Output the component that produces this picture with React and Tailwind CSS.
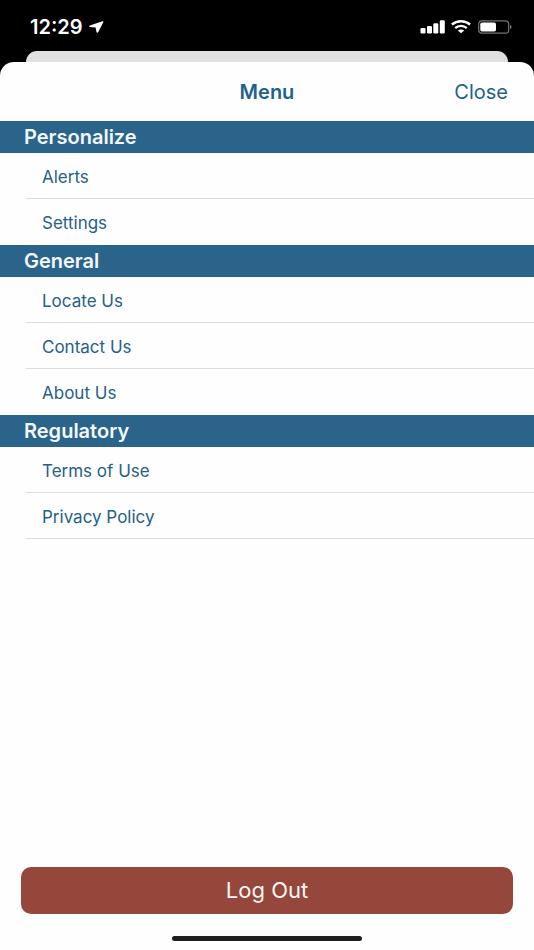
const sections = [
  { title: 'Personalize', items: ['Alerts', 'Settings'] },
  { title: 'General', items: ['Locate Us', 'Contact Us', 'About Us'] },
  { title: 'Regulatory', items: ['Terms of Use', 'Privacy Policy'], closed: true },
];

function StatusBar() {
  return (
    <div className="flex h-[51px] items-center justify-between pt-[3px] pr-[22px] pl-[30px] text-white">
      <div className="flex items-center gap-[6px]">
        <span className="text-xl leading-6 font-semibold">12:29</span>
        <svg width="15" height="12" viewBox="0 0 15 12" fill="currentColor" aria-hidden="true">
          <path d="M13.4.2.9 4.4c-1.2.4-1 1.6.2 1.7l5.5.3.8 4.3c.2 1.2 1.300 1.400 1.900.3L14.300 1.300c.4-.7-.1-1.300-.9-1.100Z" />
        </svg>
      </div>
      <div className="flex items-center gap-[6px]">
        <svg width="25" height="14" viewBox="0 0 25 14" fill="currentColor" aria-hidden="true">
          <rect x="0.5" y="8" width="5" height="5.5" rx="1.2" />
          <rect x="7" y="6" width="5" height="7.5" rx="1.2" />
          <rect x="13.3" y="3.3" width="5" height="10.2" rx="1.2" />
          <rect x="19.8" y="0.3" width="5" height="13.2" rx="1.2" />
        </svg>
        <svg width="21" height="14" viewBox="0 0 21 14" aria-hidden="true">
          <path d="M.9 4.5C6 .2 14 .2 19.1 4.5" fill="none" stroke="currentColor" strokeWidth="2.4" />
          <path d="M4.2 8.1C7.5 5.1 12.5 5.1 15.8 8.1" fill="none" stroke="currentColor" strokeWidth="2.4" />
          <path d="M10 13.2 6.8 10.6c1.8-1.5 4.6-1.5 6.4 0Z" fill="currentColor" />
        </svg>
        <svg width="34" height="14" viewBox="0 0 34 14" aria-hidden="true">
          <rect x="0.7" y="0.9" width="30" height="12.2" rx="3.2" fill="none" stroke="#747474" strokeWidth="1.2" />
          <rect x="2.3" y="2.4" width="15.7" height="9.2" rx="1.8" fill="currentColor" />
          <path d="M32 5c2 .6 2 3.4 0 4Z" fill="#747474" />
        </svg>
      </div>
    </div>
  );
}

function Section({ title, items, closed }) {
  return (
    <section>
      <h2 className="flex h-8 items-center bg-[#2a648b] pl-6 text-xl font-semibold text-[#f4f8fb]">{title}</h2>
      <ul className="pl-[26px]">
        {items.map((item, i) => (
          <li
            key={item}
            className={i < items.length - 1 || closed ? 'h-[46px] border-b border-[#dcdcde]' : 'h-[46px]'}
          >
            <a href="#" className="flex h-full items-center pt-0.5 pl-4 text-[17px] leading-6 text-[#266089]">{item}</a>
          </li>
        ))}
      </ul>
    </section>
  );
}

export default function App() {
  return (
    <div className="flex min-h-screen flex-col bg-black font-['Inter',sans-serif]">
      <StatusBar />
      <div className="mx-[26px] h-[11px] rounded-t-[11px] bg-[#e0e0e0]" />
      <main className="flex flex-1 flex-col rounded-t-[14px] bg-[#fefefe]">
        <header className="grid h-[59px] grid-cols-3 items-center px-[26px] text-xl text-[#1f628d]">
          <h1 className="col-start-2 text-center font-semibold">Menu</h1>
          <button type="button" className="justify-self-end">Close</button>
        </header>
        <nav>
          {sections.map((section) => (
            <Section key={section.title} {...section} />
          ))}
        </nav>
        <footer className="mt-auto px-[21px] pb-[9px]">
          <button type="button" className="h-[47px] w-full rounded-[10px] bg-[#96473c] text-[22px] text-[#fdf6f5]">
            Log Out
          </button>
          <div className="mx-auto mt-[22px] h-[5px] w-[190px] rounded-full bg-[#1f1f1f]" />
        </footer>
      </main>
    </div>
  );
}
